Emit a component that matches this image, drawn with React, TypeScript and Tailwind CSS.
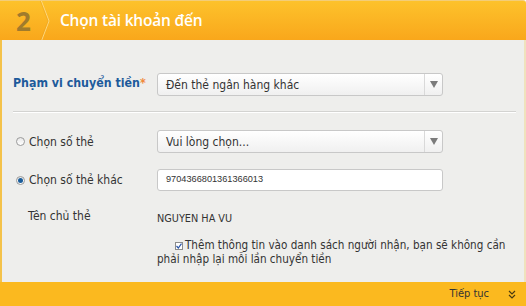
import React from "react";

const bodyFont = { fontFamily: "'DejaVu Sans Condensed', Tahoma, 'Liberation Sans', sans-serif" };

const Arrow = () => (
  <div className="flex h-full w-[18px] items-center justify-center border-l border-[#d9d9d9]">
    <svg width="8" height="7" viewBox="0 0 8 7">
      <path d="M0 0 H8 L4 7 Z" fill="#7b7b7b" />
    </svg>
  </div>
);

const Select = ({ value }: { value: string }) => (
  <div className="flex h-[23px] w-[286px] items-center rounded-[3px] border border-[#c8c8c8] bg-gradient-to-b from-white to-[#f0f0f0]">
    <span className="flex-1 pl-2 text-[12px] text-[#333]">{value}</span>
    <Arrow />
  </div>
);

const Radio = ({ checked }: { checked?: boolean }) => (
  <span className="mr-[4px] inline-flex h-[9px] w-[9px] items-center justify-center rounded-full border border-[#9a9a9a] bg-gradient-to-b from-[#e8e8e8] to-white">
    {checked && <span className="h-[5px] w-[5px] rounded-full bg-[#1b5d9a]" />}
  </span>
);

export default function App() {
  return (
    <div className="flex h-[306px] w-[526px] flex-col bg-white" style={bodyFont}>
      {/* header */}
      <div className="flex h-[40px] items-center rounded-tr-[3px] border-t border-[#f3cd78] bg-gradient-to-b from-[#fdc22b] to-[#f9a71b]">
        <span
          className="ml-[16px] w-[22px] text-[26px] font-bold leading-none text-[#a07b2c]"
          style={{ fontFamily: "'Open Sans', sans-serif" }}
        >
          2
        </span>
        <svg width="14" height="40" viewBox="0 0 14 40" className="ml-[1px]">
          <polyline points="2,-1 10,20 2,41" fill="none" stroke="#fcd880" strokeWidth="1" />
          <polyline points="1,-1 9,20 1,41" fill="none" stroke="#e59a18" strokeWidth="0.6" opacity="0.6" />
        </svg>
        <span
          className="ml-[7px] text-[15.5px] font-semibold tracking-[-0.2px] text-white"
          style={{ fontFamily: "'Open Sans', sans-serif" }}
        >
          Chọn tài khoản đến
        </span>
      </div>

      {/* body */}
      <div className="flex flex-1 flex-col border-l-2 border-r-2 border-l-[#f4c24a] border-r-[#efe2bd] bg-[#eeeeec] pl-[11px] pr-[8px]">
        <div className="mt-[33px] flex items-start">
          <span className="w-[144px] pt-[1px] text-[12.3px] font-bold text-[#1d5a9b]">
            Phạm vi chuyển tiền<span className="text-[#f0893a]">*</span>
          </span>
          <Select value="Đến thẻ ngân hàng khác" />
        </div>

        <div className="mt-[15px] h-[2px] border-t border-b border-t-[#d3d3d1] border-b-white" />

        <div className="mt-[17px] flex items-center">
          <span className="flex w-[144px] items-center pl-[3px] text-[12px] text-[#333]">
            <Radio />
            Chọn số thẻ
          </span>
          <Select value="Vui lòng chọn..." />
        </div>

        <div className="mt-[16px] flex items-center">
          <span className="flex w-[144px] items-center pl-[3px] text-[12px] text-[#333]">
            <Radio checked />
            Chọn số thẻ khác
          </span>
          <div className="flex h-[22px] w-[286px] items-center rounded-[3px] border border-[#c8c8c8] bg-white pl-2">
            <span className="text-[9.2px] text-[#333]" style={{ fontFamily: "'Liberation Sans', sans-serif" }}>
              9704366801361366013
            </span>
          </div>
        </div>

        <div className="mt-[14px] flex items-center">
          <span className="w-[144px] pl-[15px] text-[12px] text-[#333]">Tên chủ thẻ</span>
          <span className="pt-[6px] text-[10.8px] text-[#333]">NGUYEN HA VU</span>
        </div>

        <div className="ml-[144px] mt-[11px] w-[360px] text-[11.6px] leading-[14px] text-[#333]">
          <span className="ml-[18px] mr-[2px] inline-flex h-[8px] w-[8px] items-center justify-center border border-[#8c8c8c] bg-white align-[0px]">
            <svg width="6" height="6" viewBox="0 0 6 6">
              <path d="M0.5 3 L2.3 5 L5.5 0.7" fill="none" stroke="#2a55a8" strokeWidth="1.2" />
            </svg>
          </span>
          Thêm thông tin vào danh sách người nhận, bạn sẽ không cần phải nhập lại mỗi lần chuyển tiền
        </div>
      </div>

      {/* footer */}
      <div className="flex h-[24px] items-center justify-end bg-[#fbb91f] pr-[10px]">
        <span className="text-[11px] text-[#333]">Tiếp tục</span>
        <svg width="8" height="9" viewBox="0 0 8 9" className="ml-[19px]">
          <polyline points="1,1 4,4 7,1" fill="none" stroke="#4a3a10" strokeWidth="1.2" />
          <polyline points="1,5 4,8 7,5" fill="none" stroke="#4a3a10" strokeWidth="1.2" />
        </svg>
      </div>
    </div>
  );
}
